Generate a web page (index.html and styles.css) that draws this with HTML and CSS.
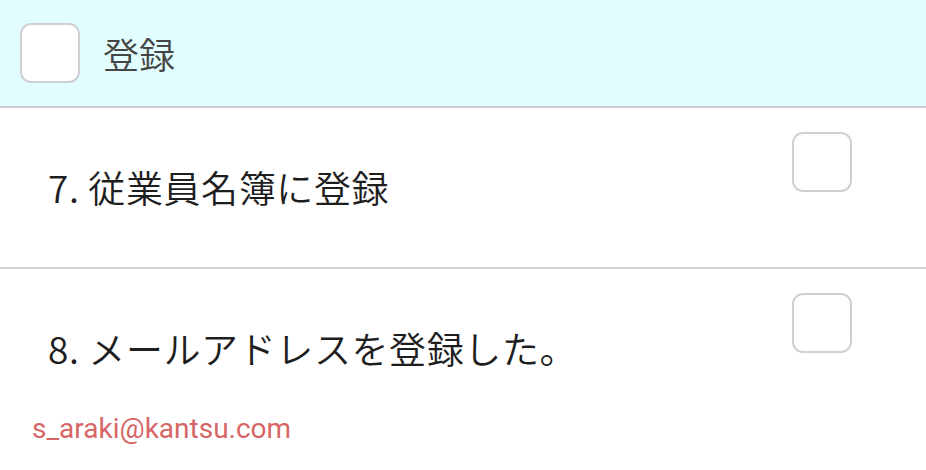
FILE: index.html
```html
<!DOCTYPE html>
<html lang="ja">
<head>
<meta charset="utf-8">
<link rel="stylesheet" href="styles.css">
</head>
<body>
<div class="page">
  <div class="header">
    <span class="box"></span>
    <span class="header-title">登録</span>
  </div>
  <div class="row">
    <span class="row-text">7. 従業員名簿に登録</span>
    <span class="box box-right"></span>
  </div>
  <div class="row row-last">
    <span class="row-text">8. メールアドレスを登録した。</span>
    <span class="box box-right"></span>
  </div>
  <div class="email">s_araki@kantsu.com</div>
</div>
</body>
</html>
```
FILE: styles.css
```css
html, body {
  margin: 0;
  padding: 0;
  background: #ffffff;
}
body {
  font-family: "Noto Sans CJK JP", "Noto Sans", sans-serif;
  width: 926px;
  height: 470px;
  overflow: hidden;
}
.page {
  display: flex;
  flex-direction: column;
}
.header {
  height: 106px;
  background: #e2fdfe;
  border-bottom: 2px solid #cdcdcd;
  display: flex;
  align-items: center;
  padding-left: 20px;
  gap: 23px;
}
.box {
  box-sizing: border-box;
  width: 60px;
  height: 60px;
  border: 2px solid #d0d0d4;
  border-radius: 11px;
  background: #ffffff;
  flex: none;
}
.header-title {
  font-size: 36px;
  font-weight: 350;
  color: #454545;
  line-height: 1;
}
.row {
  height: 159px;
  border-bottom: 2px solid #d2d2d2;
  display: flex;
  align-items: center;
  justify-content: space-between;
  padding-left: 48px;
  padding-right: 74px;
}
.row-last {
  border-bottom: none;
}
.row-text {
  font-size: 37px;
  font-weight: 350;
  letter-spacing: 0.6px;
  color: #1e1e1e;
  line-height: 1;
}
.box-right {
  align-self: flex-start;
  margin-top: 24px;
}
.email {
  font-family: Roboto, "Liberation Sans", sans-serif;
  font-size: 28px;
  color: #d66565;
  padding-left: 32px;
  margin-top: -13px;
  line-height: 1;
}
```
